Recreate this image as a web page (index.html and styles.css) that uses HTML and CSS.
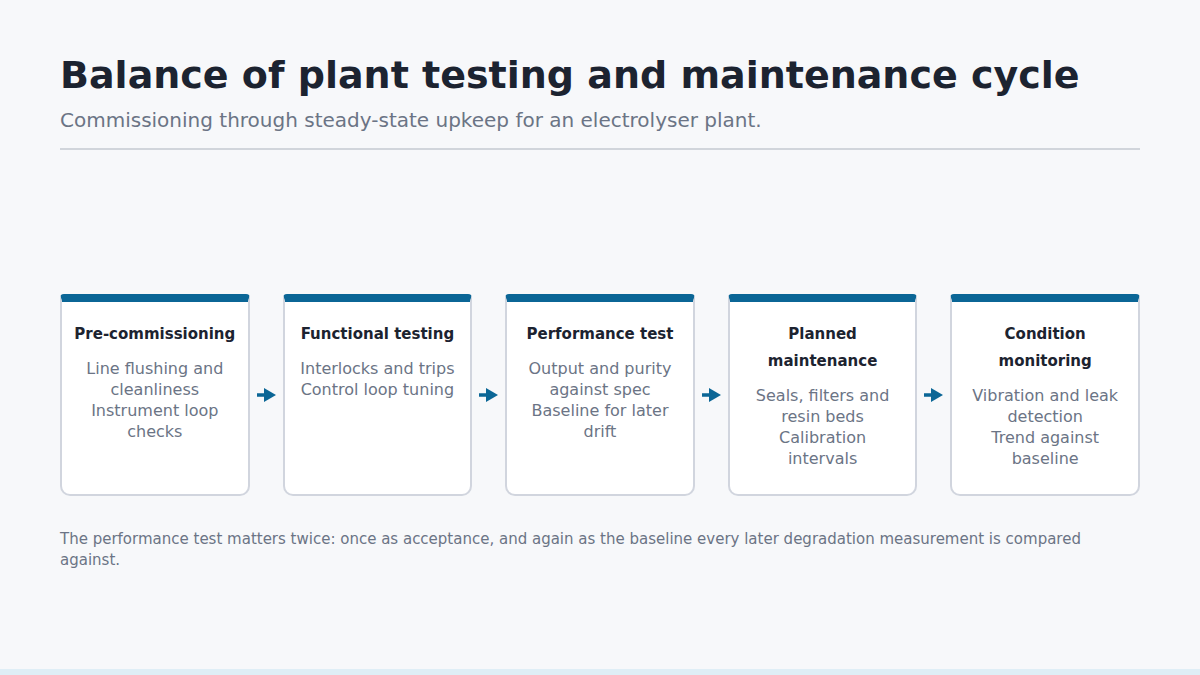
FILE: index.html
```html
<!DOCTYPE html>
<html lang="en">
<head>
<meta charset="utf-8">
<title>Balance of plant testing and maintenance cycle</title>
<link rel="stylesheet" href="styles.css">
</head>
<body>
<div class="page">
  <header class="header">
    <h1 class="title">Balance of plant testing and maintenance cycle</h1>
    <p class="subtitle">Commissioning through steady-state upkeep for an electrolyser plant.</p>
  </header>
  <section class="stage">
    <div class="card">
      <div class="card-title">Pre-commissioning</div>
      <div class="card-body">
        <div>Line flushing and cleanliness</div>
        <div>Instrument loop checks</div>
      </div>
    </div>
    <div class="link"><svg class="arrow" width="19" height="14" viewBox="0 0 19 14"><rect x="0" y="5.25" width="8" height="3.5"/><polygon points="7,0 19,7 7,14"/></svg></div>
    <div class="card">
      <div class="card-title">Functional testing</div>
      <div class="card-body">
        <div>Interlocks and trips</div>
        <div>Control loop tuning</div>
      </div>
    </div>
    <div class="link"><svg class="arrow" width="19" height="14" viewBox="0 0 19 14"><rect x="0" y="5.25" width="8" height="3.5"/><polygon points="7,0 19,7 7,14"/></svg></div>
    <div class="card">
      <div class="card-title">Performance test</div>
      <div class="card-body">
        <div>Output and purity against spec</div>
        <div>Baseline for later drift</div>
      </div>
    </div>
    <div class="link"><svg class="arrow" width="19" height="14" viewBox="0 0 19 14"><rect x="0" y="5.25" width="8" height="3.5"/><polygon points="7,0 19,7 7,14"/></svg></div>
    <div class="card">
      <div class="card-title">Planned maintenance</div>
      <div class="card-body">
        <div>Seals, filters and resin beds</div>
        <div>Calibration intervals</div>
      </div>
    </div>
    <div class="link"><svg class="arrow" width="19" height="14" viewBox="0 0 19 14"><rect x="0" y="5.25" width="8" height="3.5"/><polygon points="7,0 19,7 7,14"/></svg></div>
    <div class="card">
      <div class="card-title">Condition monitoring</div>
      <div class="card-body">
        <div>Vibration and leak detection</div>
        <div>Trend against baseline</div>
      </div>
    </div>
  </section>
  <p class="note">The performance test matters twice: once as acceptance, and again as the baseline every later degradation measurement is compared against.</p>
</div>
<div class="band"></div>
</body>
</html>
```
FILE: styles.css
```css
* { box-sizing: border-box; }
html, body { margin: 0; padding: 0; }
body {
  width: 1200px;
  height: 675px;
  background: #f7f8fa;
  font-family: "DejaVu Sans", "Liberation Sans", sans-serif;
  display: flex;
  flex-direction: column;
  overflow: hidden;
}
.page {
  flex: 1;
  padding: 52px 60px 0 60px;
  display: flex;
  flex-direction: column;
}
.header {
  border-bottom: 2px solid #d1d5db;
  padding-bottom: 14px;
}
.title {
  margin: 0;
  font-size: 38px;
  line-height: 46px;
  font-weight: bold;
  color: #1c2330;
}
.subtitle {
  margin: 8px 0 0 0;
  font-size: 20px;
  line-height: 28px;
  color: #6b7485;
}
.stage {
  margin-top: 144px;
  display: flex;
  align-items: center;
}
.card {
  flex: 1;
  height: 202px;
  background: #ffffff;
  border: 2px solid #d1d5de;
  border-top: 8px solid #0b6696;
  border-radius: 4px 4px 10px 10px;
  padding: 19px 11px 0 11px;
  text-align: center;
}
.card-title {
  font-size: 15px;
  line-height: 27px;
  font-weight: bold;
  color: #1c2330;
}
.card-body {
  margin-top: 10px;
  padding: 0 3px;
  font-size: 16px;
  line-height: 21px;
  color: #6b7485;
}
.link {
  width: 33px;
  flex: none;
  display: flex;
  justify-content: center;
  align-items: center;
}
.arrow { fill: #0b6696; display: block; }
.note {
  margin: 33px 0 0 0;
  font-size: 15px;
  line-height: 21px;
  color: #6b7485;
}
.band {
  height: 6px;
  background: #dfeef6;
  flex: none;
}
```
